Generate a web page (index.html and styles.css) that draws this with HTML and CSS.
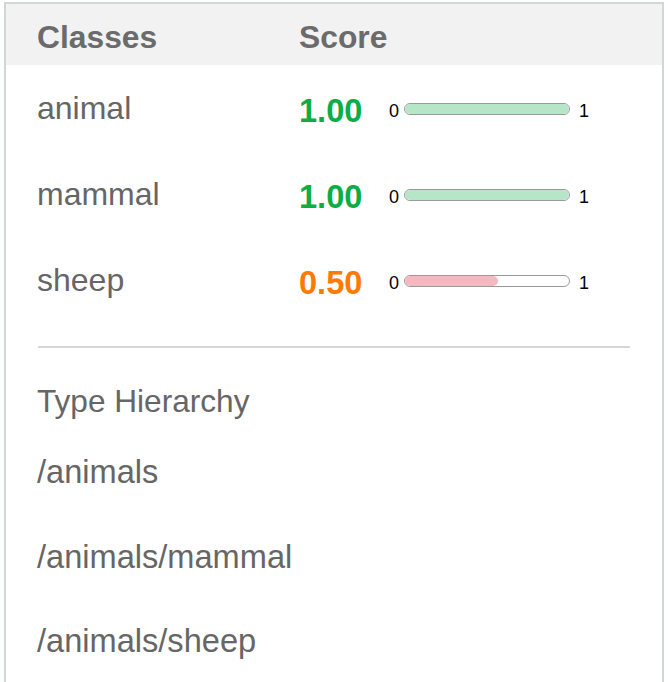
FILE: index.html
```html
<!DOCTYPE html>
<html lang="en">
<head>
<meta charset="utf-8">
<title>Classes</title>
<link rel="stylesheet" href="styles.css">
</head>
<body>
<div class="panel">
  <div class="head">
    <div class="col-class">Classes</div>
    <div class="col-score">Score</div>
  </div>
  <div class="row">
    <div class="col-class name">animal</div>
    <div class="col-score score">
      <span class="num good">1.00</span>
      <span class="lbl">0</span>
      <span class="bar"><span class="fill good-fill" style="width:100%"></span></span>
      <span class="lbl lbl-end">1</span>
    </div>
  </div>
  <div class="row">
    <div class="col-class name">mammal</div>
    <div class="col-score score">
      <span class="num good">1.00</span>
      <span class="lbl">0</span>
      <span class="bar"><span class="fill good-fill" style="width:100%"></span></span>
      <span class="lbl lbl-end">1</span>
    </div>
  </div>
  <div class="row">
    <div class="col-class name">sheep</div>
    <div class="col-score score">
      <span class="num mid">0.50</span>
      <span class="lbl">0</span>
      <span class="bar"><span class="fill mid-fill" style="width:57%"></span></span>
      <span class="lbl lbl-end">1</span>
    </div>
  </div>
  <hr class="divider">
  <div class="hier">
    <div class="hier-title">Type Hierarchy</div>
    <ul class="hier-list">
      <li>/animals</li>
      <li>/animals/mammal</li>
      <li>/animals/sheep</li>
    </ul>
  </div>
</div>
</body>
</html>
```
FILE: styles.css
```css
html, body {
  margin: 0;
  padding: 0;
  background: #ffffff;
}
body {
  font-family: "Liberation Sans", Arial, Helvetica, sans-serif;
  color: #666666;
}
.panel {
  margin: 2px 0 0 4px;
  width: 660px;
  box-sizing: border-box;
  border: 2px solid #d3d6d6;
  border-bottom: none;
  min-height: 700px;
}
.head {
  display: grid;
  grid-template-columns: 262px 1fr;
  padding: 5px 0 0 31px;
  height: 61px;
  box-sizing: border-box;
  background: #f2f2f2;
  font-size: 31.8px;
  font-weight: bold;
  line-height: 56px;
  color: #6b6b6b;
}
.row {
  display: grid;
  grid-template-columns: 262px 1fr;
  padding-left: 31px;
  height: 86px;
}
.name {
  font-size: 32px;
  line-height: 87px;
  color: #666666;
}
.score {
  display: flex;
  align-items: center;
}
.num {
  width: 90px;
  font-size: 32.6px;
  line-height: 32px;
  font-weight: bold;
  padding-top: 5px;
}
.good { color: #0bae45; }
.mid { color: #ff7a00; }
.lbl {
  font-size: 18px;
  line-height: 18px;
  padding-top: 4px;
  color: #000000;
}
.bar {
  margin-left: 5px;
  width: 166px;
  height: 12px;
  box-sizing: border-box;
  border: 1px solid #9a9a9a;
  border-radius: 6px;
  background: #ffffff;
  overflow: hidden;
  display: flex;
}
.fill {
  height: 100%;
  border-radius: 6px;
}
.good-fill { background: #b7e5c8; }
.mid-fill { background: #f4b8c0; }
.lbl-end {
  margin-left: 9px;
}
.divider {
  margin: 23px 32px 0 32px;
  border: none;
  height: 2px;
  background: #d6d6d6;
}
.hier {
  padding-left: 31px;
}
.hier-title {
  margin-top: 33px;
  font-size: 31.6px;
  line-height: 40px;
}
.hier-list {
  list-style: none;
  margin: 31px 0 0 0;
  padding: 0;
  display: flex;
  flex-direction: column;
  gap: 44.5px;
  font-size: 32.6px;
  line-height: 40px;
}
```
